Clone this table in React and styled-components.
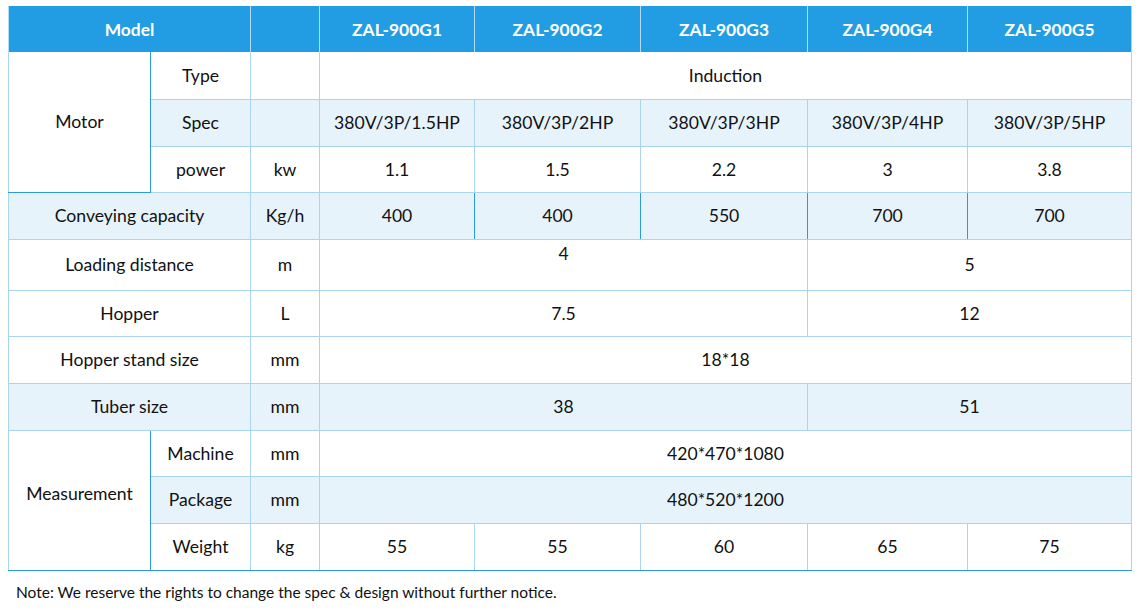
import styled, { createGlobalStyle } from "styled-components";

const GlobalStyle = createGlobalStyle`
  body {
    margin: 0;
    padding: 6px 8px;
    background: #ffffff;
    font-family: Lato, "Open Sans", sans-serif;
    color: #111111;
  }
`;

const LIGHT = "#a9d5f1";
const DARK = "#2a9ae0";

const cols = [142, 100, 69, 155, 166, 167, 160, 164];
const models = ["ZAL-900G1", "ZAL-900G2", "ZAL-900G3", "ZAL-900G4", "ZAL-900G5"];

function App() {
  return (
    <>
      <GlobalStyle />
      <Table>
        <colgroup>
          {cols.map((w, i) => (
            <col key={i} style={{ width: w }} />
          ))}
        </colgroup>
        <thead>
          <tr>
            <Th colSpan={2}>Model</Th>
            <Th></Th>
            {models.map((m) => (
              <Th key={m}>{m}</Th>
            ))}
          </tr>
        </thead>
        <tbody>
          <Row h={47}>
            <Td rowSpan={3} $group>Motor</Td>
            <Td>Type</Td>
            <Td></Td>
            <Td colSpan={5}>Induction</Td>
          </Row>
          <Row h={47} $shade>
            <Td>Spec</Td>
            <Td></Td>
            <Td>380V/3P/1.5HP</Td>
            <Td>380V/3P/2HP</Td>
            <Td>380V/3P/3HP</Td>
            <Td>380V/3P/4HP</Td>
            <Td>380V/3P/5HP</Td>
          </Row>
          <Row h={46}>
            <Td>power</Td>
            <Td>kw</Td>
            <Td>1.1</Td>
            <Td>1.5</Td>
            <Td>2.2</Td>
            <Td>3</Td>
            <Td>3.8</Td>
          </Row>
          <Row h={47} $shade>
            <Td colSpan={2}>Conveying capacity</Td>
            <Td>Kg/h</Td>
            <Td>400</Td>
            <Td $dark>400</Td>
            <Td $dark>550</Td>
            <Td $dark>700</Td>
            <Td $dark>700</Td>
          </Row>
          <Row h={51}>
            <Td colSpan={2}>Loading distance</Td>
            <Td>m</Td>
            <Td colSpan={3} $raised>4</Td>
            <Td colSpan={2}>5</Td>
          </Row>
          <Row h={46}>
            <Td colSpan={2}>Hopper</Td>
            <Td>L</Td>
            <Td colSpan={3}>7.5</Td>
            <Td colSpan={2}>12</Td>
          </Row>
          <Row h={47}>
            <Td colSpan={2}>Hopper stand size</Td>
            <Td>mm</Td>
            <Td colSpan={5}>18*18</Td>
          </Row>
          <Row h={47} $shade>
            <Td colSpan={2}>Tuber size</Td>
            <Td>mm</Td>
            <Td colSpan={3}>38</Td>
            <Td colSpan={2}>51</Td>
          </Row>
          <Row h={46}>
            <Td rowSpan={3} $group $lift>Measurement</Td>
            <Td>Machine</Td>
            <Td>mm</Td>
            <Td colSpan={5}>420*470*1080</Td>
          </Row>
          <Row h={47} $shade>
            <Td>Package</Td>
            <Td>mm</Td>
            <Td colSpan={5}>480*520*1200</Td>
          </Row>
          <Row h={47} $last>
            <Td>Weight</Td>
            <Td>kg</Td>
            <Td>55</Td>
            <Td>55</Td>
            <Td>60</Td>
            <Td>65</Td>
            <Td>75</Td>
          </Row>
        </tbody>
      </Table>
      <Note>Note: We reserve the rights to change the spec &amp; design without further notice.</Note>
    </>
  );
}

const Table = styled.table`
  width: 1123px;
  table-layout: fixed;
  border-collapse: collapse;
  border-left: 1px solid ${DARK};
  border-right: 1px solid ${LIGHT};
  border-bottom: 1px solid ${DARK};
  font-size: 17.6px;
`;

const Th = styled.th`
  height: 46px;
  padding: 0;
  background: #229ce2;
  color: #ffffff;
  font-weight: 700;
  font-size: 17.4px;
  text-align: center;
  border-left: 1px solid #b4dcf5;
`;

const Row = styled.tr`
  height: ${(p) => p.h}px;
  background: ${(p) => (p.$shade ? "#e7f3fb" : "#ffffff")};

  td {
    border-bottom: 1px solid ${(p) => (p.$last ? DARK : LIGHT)};
  }
`;

const Td = styled.td`
  padding: 0 4px;
  text-align: center;
  vertical-align: ${(p) => (p.$raised ? "top" : "middle")};
  padding-top: ${(p) => (p.$raised ? "3px" : "0")};
  padding-bottom: ${(p) => (p.$lift ? "14px" : "0")};
  border-left: 1px solid ${(p) => (p.$dark ? DARK : LIGHT)};
  white-space: nowrap;
  ${(p) =>
    p.$group &&
    `
    background: #ffffff;
    border-right: 1px solid ${DARK};
    border-bottom-color: ${DARK} !important;
  `}
`;

const Note = styled.p`
  margin: 12px 0 0 8px;
  font-size: 15.5px;
  color: #111111;
`;

export default App;
